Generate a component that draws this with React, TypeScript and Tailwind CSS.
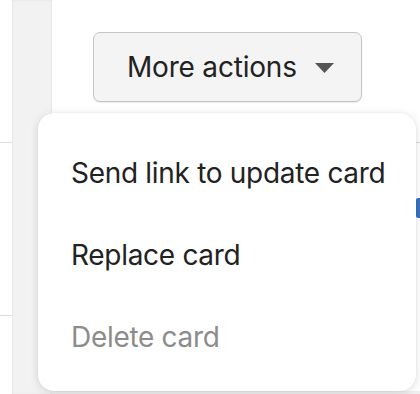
import React from "react";

export default function App() {
  return (
    <div
      className="relative w-[420px] h-[394px] overflow-hidden bg-white"
      style={{ fontFamily: "Inter, 'Noto Sans', sans-serif" }}
    >
      <div className="flex h-full">
        {/* left white sliver */}
        <div className="w-[12px] h-full bg-white flex flex-col">
          <div className="h-[143px] border-b border-[#dcdcdc]" />
          <div className="h-[173px] border-b border-[#dcdcdc]" />
        </div>
        {/* grey gutter */}
        <div className="w-[40px] h-full bg-[#f2f2f2] shadow-[inset_1px_0_2px_rgba(0,0,0,0.05),inset_-1px_0_2px_rgba(0,0,0,0.05)]" />
        {/* main area */}
        <div className="flex-1 h-full flex flex-col">
          <div className="flex-1 bg-white pt-[32px] pl-[41px]">
            <button className="flex items-center h-[70px] w-[269px] rounded-[7px] border-[1.5px] border-[#c4c4c4] bg-[#f4f4f4] pl-[33px] text-[28px] text-[#222] tracking-[-0.2px] shadow-[0_1px_1px_rgba(0,0,0,0.08)]">
              <span>More actions</span>
              <svg className="ml-[18px] mt-[2px]" width="19" height="10" viewBox="0 0 19 10">
                <path d="M0 0 L19 0 L9.5 10 Z" fill="#555" />
              </svg>
            </button>
          </div>
          <div className="h-[3px] bg-[#efefef]" />
        </div>
      </div>

      {/* right edge details */}
      <div className="absolute right-0 top-[142px] w-[6px] h-[1px] bg-[#d8d8d8]" />
      <div className="absolute right-0 top-[198px] w-[4px] h-[20px] bg-[#3b72c4] rounded-l-[2px]" />

      {/* dropdown menu */}
      <div className="absolute left-[38px] top-[113px] w-[378px] h-[278px] rounded-[16px] bg-white shadow-[0_2px_10px_rgba(0,0,0,0.12),0_0_2px_rgba(0,0,0,0.08)] flex flex-col pl-[33px] pt-[41px] text-[28px] tracking-[-0.3px]">
        <div className="shrink-0 h-[82px] leading-[38px] text-[#222]">Send link to update card</div>
        <div className="shrink-0 h-[82px] leading-[38px] text-[#222]">Replace card</div>
        <div className="shrink-0 h-[38px] leading-[38px] text-[#8c8c8c]">Delete card</div>
      </div>
    </div>
  );
}
